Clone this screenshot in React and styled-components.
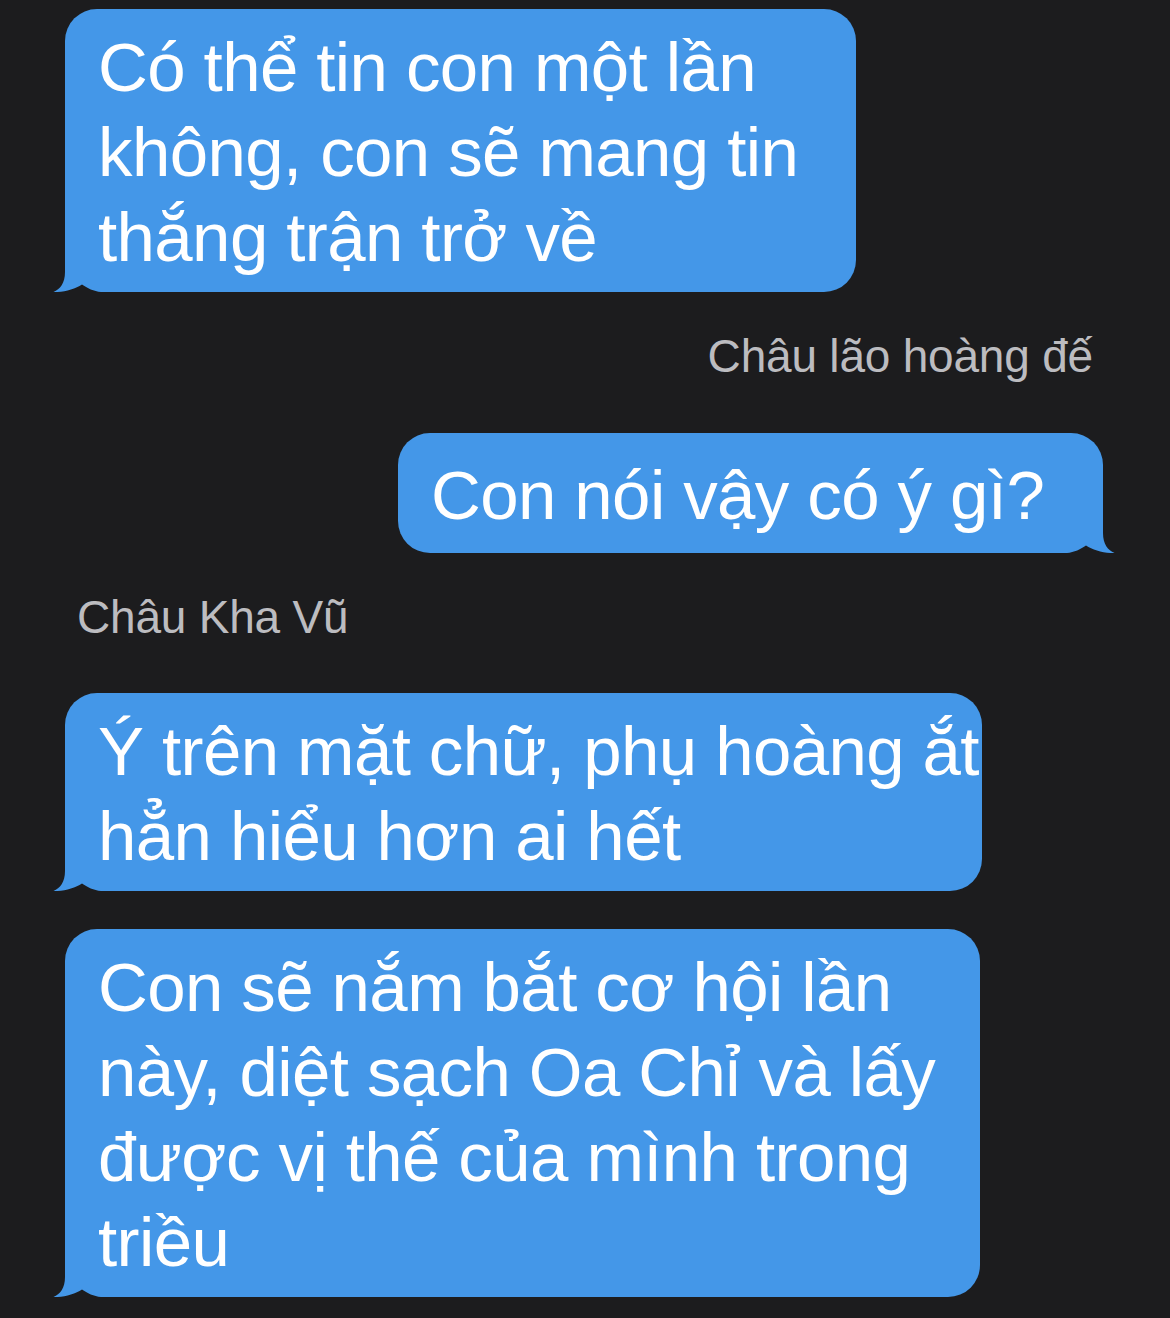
import React from "react";
import styled, { createGlobalStyle } from "styled-components";

const BG = "#1c1c1e";
const BLUE = "#4497e8";

const Global = createGlobalStyle`
  html, body {
    margin: 0;
    padding: 0;
    background: ${BG};
  }
  body {
    font-family: "Liberation Sans", Arial, "Noto Sans", sans-serif;
    -webkit-font-smoothing: antialiased;
  }
`;

const Thread = styled.div`
  width: 1170px;
  min-height: 1318px;
  box-sizing: border-box;
  padding: 9px 67px 22px 65px;
  display: flex;
  flex-direction: column;
  background: ${BG};
`;

const Row = styled.div`
  display: flex;
  justify-content: ${(p) => (p.$side === "right" ? "flex-end" : "flex-start")};
  margin-top: ${(p) => p.$gap || 0}px;
`;

const Bubble = styled.div`
  position: relative;
  box-sizing: border-box;
  width: ${(p) => p.$width}px;
  min-height: 120px;
  padding: 16px 0 12px 33px;
  display: flex;
  flex-direction: column;
  justify-content: center;
  background: ${BLUE};
  color: #ffffff;
  border-radius: 32px;
  ${(p) =>
    p.$side === "right"
      ? "border-bottom-right-radius: 0;"
      : "border-bottom-left-radius: 0;"}
  font-size: 69px;
  line-height: 85px;
  letter-spacing: -0.6px;
`;

const Line = styled.div`
  white-space: nowrap;
`;

const TailSvg = styled.svg`
  position: absolute;
  bottom: 0;
  width: 48px;
  height: 30px;
  ${(p) =>
    p.$side === "right"
      ? "right: -12px; transform: scaleX(-1);"
      : "left: -12px;"}
`;

const Name = styled.div`
  font-size: 46px;
  line-height: 54px;
  color: #bcbcc0;
  letter-spacing: -0.2px;
  text-align: ${(p) => (p.$side === "right" ? "right" : "left")};
  padding: ${(p) => (p.$side === "right" ? "0 10px 0 0" : "0 0 0 12px")};
  margin-top: 37px;
`;

function Tail({ side }) {
  return (
    <TailSvg $side={side} viewBox="0 0 48 30" aria-hidden="true">
      <rect x="12" y="0" width="36" height="30" fill={BG} />
      <path
        d="M12,0 L48,0 L48,30 C41,29.5 34,26 29,22.5 C22,27 11,30.5 0.5,30 C7,27.5 12,21 12,10 Z"
        fill={BLUE}
      />
    </TailSvg>
  );
}

function Message({ side = "left", width, gap, lines }) {
  return (
    <Row $side={side} $gap={gap}>
      <Bubble $side={side} $width={width}>
        {lines.map((l, i) => (
          <Line key={i}>{l}</Line>
        ))}
        <Tail side={side} />
      </Bubble>
    </Row>
  );
}

export default function App() {
  return (
    <>
      <Global />
      <Thread>
        <Message
          width={791}
          lines={["Có thể tin con một lần", "không, con sẽ mang tin", "thắng trận trở về"]}
        />
        <Name $side="right">Châu lão hoàng đế</Name>
        <Message side="right" width={705} gap={50} lines={["Con nói vậy có ý gì?"]} />
        <Name $side="left">Châu Kha Vũ</Name>
        <Message
          width={917}
          gap={49}
          lines={["Ý trên mặt chữ, phụ hoàng ắt", "hẳn hiểu hơn ai hết"]}
        />
        <Message
          width={915}
          gap={38}
          lines={[
            "Con sẽ nắm bắt cơ hội lần",
            "này, diệt sạch Oa Chỉ và lấy",
            "được vị thế của mình trong",
            "triều",
          ]}
        />
      </Thread>
    </>
  );
}
